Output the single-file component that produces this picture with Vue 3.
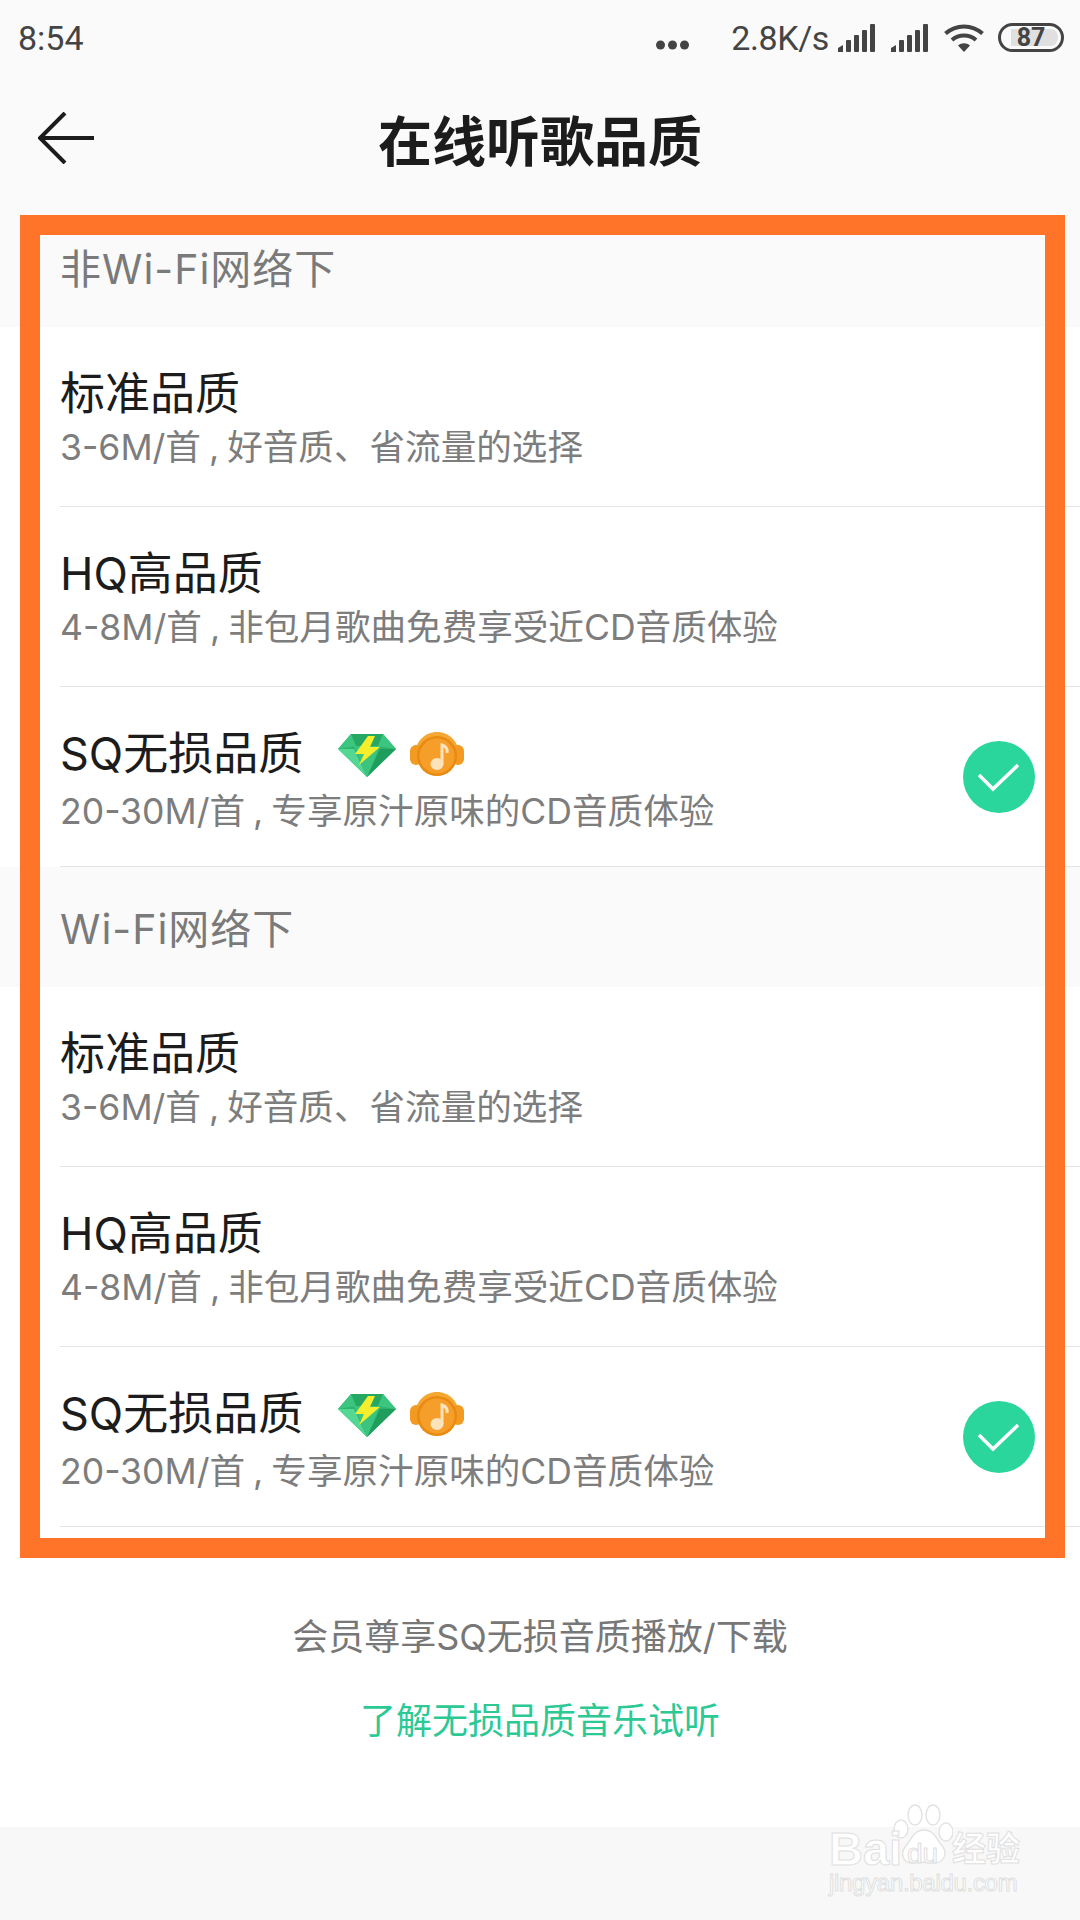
<script setup>
const qualities = [
  { name: '标准品质', desc: '3-6M/首 , 好音质、省流量的选择' },
  { name: 'HQ高品质', desc: '4-8M/首 , 非包月歌曲免费享受近CD音质体验' },
  { name: 'SQ无损品质', desc: '20-30M/首 , 专享原汁原味的CD音质体验', vip: true, checked: true }
]

const sections = ['非Wi-Fi网络下', 'Wi-Fi网络下']
const signals = [1, 2]
</script>

<template>
  <div class="page">
    <div class="status">
      <span class="time">8:54</span>
      <div class="status-right">
        <svg class="dots" width="33" height="10" viewBox="0 0 33 10">
          <circle cx="4.5" cy="5" r="4.5" />
          <circle cx="16.5" cy="5" r="4.5" />
          <circle cx="28.5" cy="5" r="4.5" />
        </svg>
        <span class="speed">2.8K/s</span>
        <svg v-for="s in signals" :key="s" class="signal" width="38" height="28" viewBox="0 0 38 28">
          <path d="M0 28V24L5 21V28Z" />
          <rect x="8" y="16" width="5" height="12" rx="1" />
          <rect x="16" y="11" width="5" height="17" rx="1" />
          <rect x="24" y="6" width="5" height="22" rx="1" />
          <rect x="32" y="0" width="5" height="28" rx="1" />
        </svg>
        <svg class="wifi" width="40" height="28" viewBox="0 0 40 28" fill="none" stroke="#444" stroke-width="4">
          <path d="M1.5 9.5C12 0 28 0 38.5 9.5" />
          <path d="M8 16C14.5 10 25.5 10 32 16" />
          <path d="M20 28L14 21.5C17.5 18.6 22.5 18.6 26 21.5Z" fill="#444" stroke="none" />
        </svg>
        <div class="battery">
          <div class="battery-fill"></div>
          <span class="battery-num">87</span>
        </div>
      </div>
    </div>

    <div class="nav">
      <svg class="back" width="56" height="52" viewBox="0 0 56 52" fill="none" stroke="#1c1c1c" stroke-width="4">
        <path d="M27 1L2 26L27 51" />
        <path d="M2 26H56" />
      </svg>
      <h1 class="title">在线听歌品质</h1>
    </div>

    <section v-for="label in sections" :key="label">
      <div class="section-label">{{ label }}</div>
      <div v-for="q in qualities" :key="q.name" class="row">
        <div class="row-text">
          <div class="row-title" :class="{ tall: q.vip }">
            <span>{{ q.name }}</span>
            <template v-if="q.vip">
              <svg class="gem" width="58" height="43" viewBox="0 0 58 43">
                <path d="M13 0H45L58 15L29 43L0 15Z" fill="#2cb56f" />
                <path d="M13 0H45L40 12H18Z" fill="#27a862" />
                <path d="M0 15L13 0L18 12Z" fill="#3cc57f" />
                <path d="M58 15L45 0L40 12Z" fill="#3cc57f" />
                <path d="M0 15H16L29 43Z" fill="#55d794" />
                <path d="M58 15H42L29 43Z" fill="#1f9d5d" />
                <path d="M16 12H42L29 43Z" fill="#3bc47e" />
                <path d="M30 2L17 20H26L21 31L42 13H32L37 2Z" fill="#f4ee2c" />
              </svg>
              <svg class="phones" width="54" height="44" viewBox="0 0 54 44">
                <path d="M5 24C5 9 15 0 27 0S49 9 49 24Z" fill="#f5a733" />
                <rect x="0" y="13" width="12" height="20" rx="6" fill="#f29a22" />
                <rect x="42" y="13" width="12" height="20" rx="6" fill="#f29a22" />
                <circle cx="27" cy="24" r="20" fill="#e98a12" />
                <circle cx="27" cy="24" r="17.5" fill="#f59f2a" />
                <ellipse cx="27" cy="32" rx="6.5" ry="6" fill="#fde3bb" />
                <path d="M32 32V13C35 14 38 16 37 21" fill="none" stroke="#fde3bb" stroke-width="3" />
              </svg>
            </template>
          </div>
          <div class="row-desc">{{ q.desc }}</div>
        </div>
        <svg v-if="q.checked" class="check" width="72" height="72" viewBox="0 0 72 72">
          <circle cx="36" cy="36" r="36" fill="#2bd69c" />
          <path d="M16 34L30 48L55 24" fill="none" stroke="#fff" stroke-width="3.5" />
        </svg>
      </div>
    </section>

    <div class="footer">
      <p class="footer-note">会员尊享SQ无损音质播放/下载</p>
      <p class="footer-link">了解无损品质音乐试听</p>
    </div>
    <div class="bottom"></div>

    <!-- annotation frame drawn over the screenshot -->
    <div class="frame"></div>

    <div class="watermark">
      <svg class="paw" width="60" height="62" viewBox="0 0 60 62" fill="#fff" stroke="#e3e3e3" stroke-width="1.5">
        <ellipse cx="8" cy="25" rx="7" ry="9" />
        <ellipse cx="22" cy="11" rx="7" ry="10" />
        <ellipse cx="40" cy="11" rx="7" ry="10" />
        <ellipse cx="53" cy="28" rx="7" ry="9" />
        <path d="M31 26C42 26 44 37 50 43C55 50 50 60 40 59C33 58 28 58 21 59C10 60 7 50 12 43C18 37 20 26 31 26Z" />
      </svg>
      <span class="wm-bai">Bai</span>
      <span class="wm-du">du</span>
      <span class="wm-jy">经验</span>
      <span class="wm-url">jingyan.baidu.com</span>
    </div>
  </div>
</template>

<style scoped>
.page {
  position: relative;
  width: 1080px;
  height: 1920px;
  overflow: hidden;
  background: #fff;
  font-family: Inter, "Noto Sans CJK SC", sans-serif;
}

.status {
  height: 75px;
  background: #fafafa;
  display: flex;
  align-items: center;
  justify-content: space-between;
  padding: 0 16px 0 18px;
  color: #444;
  font-family: Roboto, sans-serif;
}
.time {
  font-size: 34px;
}
.status-right {
  display: flex;
  align-items: center;
}
.dots {
  fill: #444;
  margin: 15px 42px 0 0;
}
.speed {
  font-size: 34px;
  margin-right: 9px;
  letter-spacing: -0.4px;
}
.signal {
  fill: #444;
  margin-right: 15px;
}
.wifi {
  margin-right: 14px;
}
.battery {
  position: relative;
  width: 66px;
  height: 29px;
  box-sizing: border-box;
  border: 3px solid #444;
  border-radius: 15px;
}
.battery-fill {
  position: absolute;
  left: 10px;
  top: 3px;
  bottom: 3px;
  right: 3px;
  background: #e0e0e0;
  border-radius: 0 8px 8px 0;
}
.battery-num {
  position: absolute;
  left: 0;
  right: 0;
  top: 0;
  text-align: center;
  font-size: 25px;
  line-height: 23px;
  font-weight: 700;
  color: #444;
}

.nav {
  position: relative;
  height: 132px;
  box-sizing: border-box;
  padding-bottom: 5px;
  background: #fafafa;
  display: flex;
  align-items: center;
  justify-content: center;
}
.back {
  position: absolute;
  left: 38px;
  top: 37px;
}
.title {
  margin: 0;
  font-size: 54px;
  font-weight: 700;
  color: #1c1c1c;
}

.section-label {
  height: 120px;
  box-sizing: border-box;
  padding: 3px 0 0 60px;
  background: #fafafa;
  font-size: 41px;
  letter-spacing: 1px;
  line-height: 118px;
  color: #7a7a7a;
}
.row {
  height: 180px;
  box-sizing: border-box;
  margin-left: 60px;
  padding-right: 45px;
  border-bottom: 1px solid #e4e4e4;
  display: flex;
  align-items: center;
  justify-content: space-between;
}
.row-title {
  display: flex;
  align-items: center;
  height: 62px;
  box-sizing: border-box;
  padding-bottom: 4px;
  font-size: 45px;
  color: #1c1c1c;
}
.row-title.tall {
  height: 70px;
}
.row-desc {
  height: 48px;
  line-height: 48px;
  font-size: 35.6px;
  word-spacing: -2px;
  color: #7d7d7d;
}
.gem {
  margin: 9px 0 0 35px;
}
.phones {
  margin: 7px 0 0 14px;
}

.footer {
  height: 300px;
  box-sizing: border-box;
  padding-top: 85px;
  text-align: center;
  font-size: 36px;
}
.footer-note {
  margin: 0;
  height: 50px;
  line-height: 50px;
  color: #777;
}
.footer-link {
  margin: 34px 0 0;
  height: 50px;
  line-height: 50px;
  color: #2cc995;
}
.bottom {
  height: 93px;
  background: #f8f8f8;
}

.frame {
  position: absolute;
  left: 20px;
  top: 215px;
  width: 1045px;
  height: 1343px;
  box-sizing: border-box;
  border: 20px solid #ff7429;
}

.watermark {
  position: absolute;
  left: 820px;
  top: 1800px;
  width: 220px;
  height: 110px;
  pointer-events: none;
  font-family: "Liberation Sans", "Noto Sans CJK SC", sans-serif;
  color: #fff;
  -webkit-text-stroke: 1px #e0e0e0;
}
.paw {
  position: absolute;
  left: 73px;
  top: 4px;
}
.wm-bai,
.wm-du,
.wm-jy,
.wm-url {
  position: absolute;
  white-space: nowrap;
}
.wm-bai {
  left: 9px;
  top: 22px;
  font-size: 47px;
  line-height: 54px;
  font-weight: 700;
}
.wm-du {
  left: 87px;
  top: 38px;
  font-size: 28px;
  line-height: 32px;
}
.wm-jy {
  left: 132px;
  top: 26px;
  font-size: 34px;
  line-height: 46px;
  font-weight: 700;
}
.wm-url {
  left: 9px;
  top: 68px;
  font-size: 24px;
  line-height: 30px;
  letter-spacing: -0.3px;
}
</style>

<style>
body {
  background: #fff;
}
</style>
